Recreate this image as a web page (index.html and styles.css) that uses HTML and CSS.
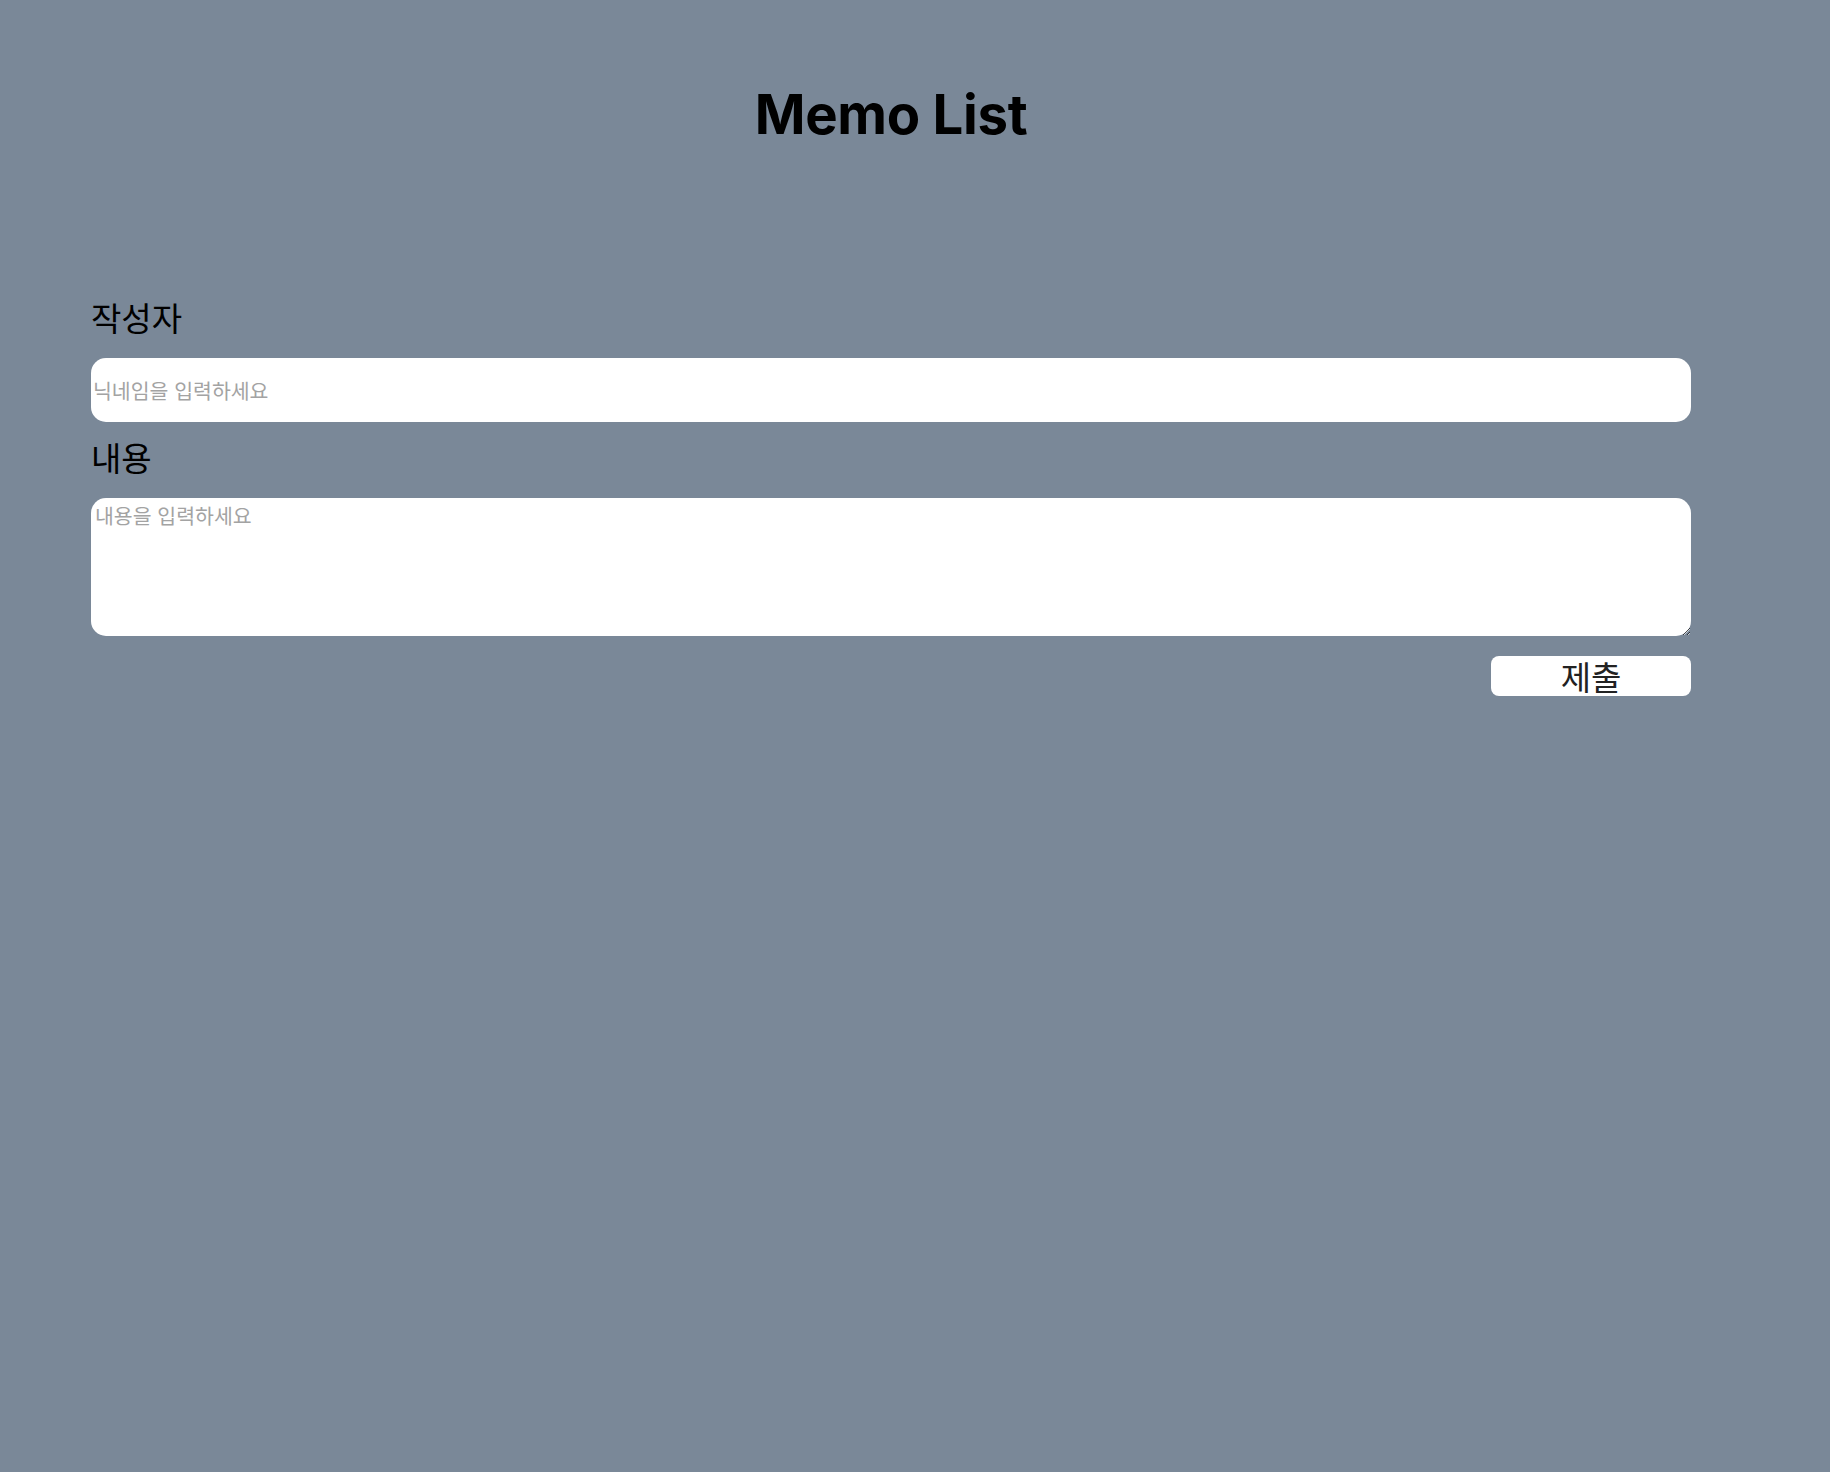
FILE: index.html
```html
<!DOCTYPE html>
<html lang="ko">
<head>
<meta charset="utf-8">
<title>Memo List</title>
<link rel="stylesheet" href="styles.css">
</head>
<body>
<main class="container">
  <h1 class="title">Memo List</h1>
  <form class="memo-form">
    <label class="field-label" for="writer">작성자</label>
    <input class="field-input" id="writer" type="text" placeholder="닉네임을 입력하세요">
    <label class="field-label" for="content">내용</label>
    <textarea class="field-textarea" id="content" placeholder="내용을 입력하세요"></textarea>
    <div class="actions">
      <button class="submit-btn" type="button">제출</button>
    </div>
  </form>
</main>
</body>
</html>
```

FILE: styles.css
```css
html, body {
  margin: 0;
  padding: 0;
  background: #7a8898;
  min-height: 100%;
}
body {
  font-family: Inter, "Noto Sans CJK KR", sans-serif;
  color: #000;
  min-height: 1472px;
}
.container {
  width: 1600px;
  margin-left: 91px;
  padding-top: 81px;
}
.title {
  margin: 0;
  text-align: center;
  font-family: Inter, "Noto Sans CJK KR", sans-serif;
  font-weight: 700;
  font-size: 54.5px;
  line-height: 66px;
  letter-spacing: -0.3px;
}
.memo-form {
  display: flex;
  flex-direction: column;
  margin-top: 152px;
}
.field-label {
  display: block;
  font-family: "Noto Sans CJK KR", sans-serif;
  font-size: 33px;
  line-height: 36px;
  margin: 17px 0 23px;
  color: #000;
}
.field-label:first-child {
  margin-top: 0;
}
.field-input,
.field-textarea {
  box-sizing: border-box;
  width: 1600px;
  border: none;
  outline: none;
  background: #fff;
  border-radius: 15px;
  font-family: "Noto Sans CJK KR", sans-serif;
  font-size: 20.5px;
  color: #222;
  margin: 0;
}
.field-input {
  height: 64px;
  padding: 0 2px;
}
.field-textarea {
  height: 138px;
  padding: 2px 4px;
  resize: vertical;
  display: block;
}
.field-input::placeholder,
.field-textarea::placeholder {
  color: #a3a3a3;
}
.actions {
  display: flex;
  justify-content: flex-end;
  margin-top: 20px;
}
.submit-btn {
  width: 200px;
  height: 40px;
  border: none;
  border-radius: 8px;
  background: #fff;
  color: #222;
  font-family: "Noto Sans CJK KR", sans-serif;
  font-size: 33px;
  line-height: 40px;
  padding: 0;
}
```
